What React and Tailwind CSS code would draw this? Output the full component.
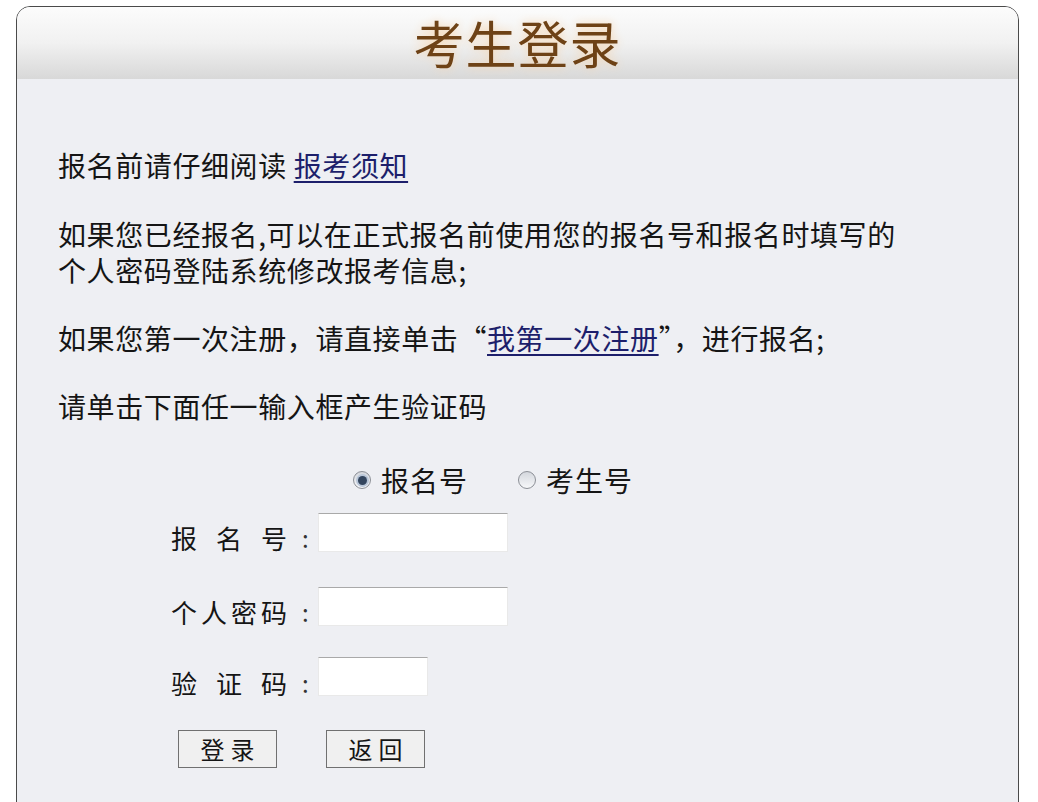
import { useState } from "react";

const font = { fontFamily: '"Noto Sans CJK SC", "Noto Sans", sans-serif' };

const Radio = ({ checked, label, onClick }) => (
  <label className="flex items-center cursor-pointer" onClick={onClick}>
    <span className="block shrink-0 w-[18px] h-[18px] rounded-full border border-[#8c8f96] bg-gradient-to-b from-[#d4d7dd] to-[#f7f8fa] flex items-center justify-center">
      {checked ? (
        <span className="block w-[9px] h-[9px] rounded-full bg-[#33455e] shadow-[0_0_0_2px_#b9c6d8]" />
      ) : null}
    </span>
    <span className="ml-[10px] text-[28px] leading-[36px] tracking-[1px] text-[#151515]">{label}</span>
  </label>
);

const FieldRow = ({ chars, inputWidth, className, labelPad = "pt-[7px]" }) => (
  <div className={`flex items-start ${className || ""}`}>
    <div className={`w-[116px] ${labelPad} flex justify-between text-[26px] leading-[36px] text-[#151515]`}>
      {chars.map((c) => (
        <span key={c}>{c}</span>
      ))}
    </div>
    <span className={`ml-[15px] ${labelPad} text-[24px] leading-[36px] text-[#333]`}>:</span>
    <input
      className={`ml-[9px] h-[39px] ${inputWidth} bg-white border border-[#e9e9e9] border-t-[#a9a9a9] outline-0 px-1 text-[20px]`}
      type="text"
    />
  </div>
);

export default function App() {
  const [mode, setMode] = useState("bm");

  return (
    <div className="bg-white w-[1038px] h-[802px] overflow-hidden pt-[6px] pl-[16px]" style={font}>
      <div className="w-[1003px] h-[830px] rounded-t-[14px] border-[1.5px] border-[#4a4a4a] bg-[#eeeff3] overflow-hidden">
        <div className="h-[72px] bg-gradient-to-b from-[#fcfcfc] via-[#f1f1f1] to-[#d8d8d8] flex items-center justify-center">
          <h1 className="text-[51px] leading-none -mt-[2px] text-[#6e4216] tracking-[1px] [text-shadow:0_0_10px_#f6d6b0]">
            考生登录
          </h1>
        </div>

        <div className="pl-[41px] text-[28px] leading-[36px] tracking-[0.6px] text-[#151515]">
          <p className="mt-[68px]">
            报名前请仔细阅读{" "}
            <a href="#" className="text-[#1d1f6b] underline underline-offset-[4px]">
              报考须知
            </a>
          </p>

          <p className="mt-[33px]">
            如果您已经报名,可以在正式报名前使用您的报名号和报名时填写的
            <br />
            个人密码登陆系统修改报考信息;
          </p>

          <p className="mt-[32px]">
            如果您第一次注册，请直接单击“
            <a href="#" className="text-[#1d1f6b] underline underline-offset-[4px]">
              我第一次注册
            </a>
            ”，进行报名;
          </p>

          <p className="mt-[32px]">请单击下面任一输入框产生验证码</p>
        </div>

        <div className="mt-[38px] flex pl-[336px] gap-[50px]">
          <Radio checked={mode === "bm"} label="报名号" onClick={() => setMode("bm")} />
          <Radio checked={mode === "ks"} label="考生号" onClick={() => setMode("ks")} />
        </div>

        <div className="pl-[154px]">
          <FieldRow chars={["报", "名", "号"]} inputWidth="w-[190px]" className="mt-[15px]" />
          <FieldRow chars={["个", "人", "密", "码"]} inputWidth="w-[190px]" className="mt-[31px]" />
          <FieldRow chars={["验", "证", "码"]} inputWidth="w-[110px]" className="mt-[27px]" labelPad="pt-[8px]" />

          <div className="flex gap-[49px] mt-[29px] pl-[7px]">
            <button className="w-[99px] h-[38px] border border-[#707070] bg-[#f0f0f0] text-[24px] leading-none tracking-[6px] pl-[6px] text-[#151515]">
              登录
            </button>
            <button className="w-[99px] h-[38px] border border-[#707070] bg-[#f0f0f0] text-[24px] leading-none tracking-[6px] pl-[6px] text-[#151515]">
              返回
            </button>
          </div>
        </div>
      </div>
    </div>
  );
}
